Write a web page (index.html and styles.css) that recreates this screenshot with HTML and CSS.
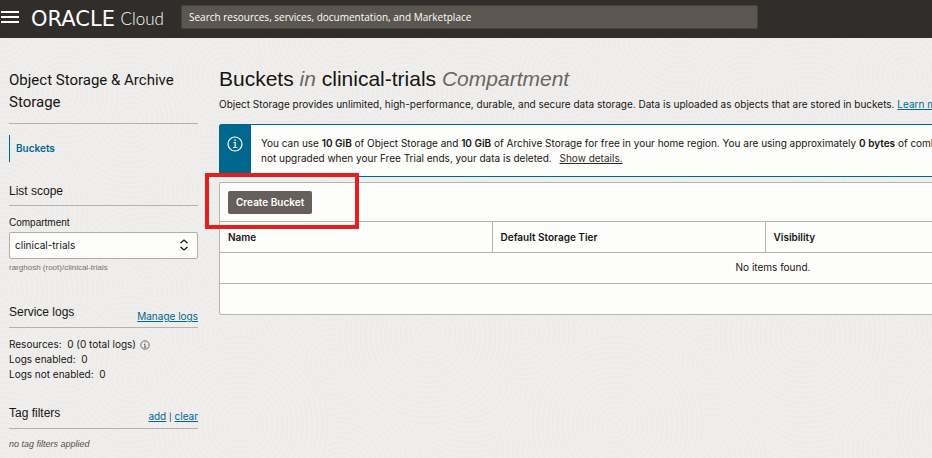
FILE: index.html
```
<!DOCTYPE html>
<html lang="en">
<head>
<meta charset="utf-8">
<title>Buckets - Oracle Cloud</title>
<link rel="stylesheet" href="styles.css">
</head>
<body>
<svg class="backdrop" aria-hidden="true">
  <defs>
    <radialGradient id="ring" gradientUnits="userSpaceOnUse" cx="0" cy="0" r="5" spreadMethod="repeat">
      <stop offset="0" stop-color="#f0efed"/>
      <stop offset=".5" stop-color="#ecebea"/>
      <stop offset="1" stop-color="#f0efed"/>
    </radialGradient>
    <circle id="disc" r="90" fill="url(#ring)"/>
    <circle id="small" r="55" fill="url(#ring)"/>
    <g id="tile">
      <use href="#disc" x="20" y="10"/>
      <use href="#disc" x="150" y="100"/>
      <use href="#disc" x="300" y="30"/>
      <use href="#disc" x="20" y="190"/>
      <use href="#small" x="230" y="170"/>
      <use href="#disc" x="330" y="210"/>
      <use href="#small" x="85" y="75"/>
      <use href="#disc" x="170" y="270"/>
      <use href="#small" x="245" y="55"/>
    </g>
  </defs>
  <use href="#tile" x="-20" y="20"/>
  <use href="#tile" x="320" y="20"/>
  <use href="#tile" x="660" y="20"/>
  <use href="#tile" x="-20" y="280"/>
  <use href="#tile" x="320" y="280"/>
  <use href="#tile" x="660" y="280"/>
  <use href="#small" x="333" y="362"/>
  <use href="#small" x="522" y="332"/>
  <use href="#small" x="710" y="362"/>
  <use href="#small" x="900" y="330"/>
  <use href="#disc" x="240" y="425"/>
  <use href="#disc" x="615" y="425"/>
  <use href="#disc" x="980" y="425"/>
  <use href="#disc" x="428" y="335"/>
  <use href="#disc" x="803" y="335"/>
</svg>
<header class="topbar">
  <button class="menu" aria-label="Navigation menu"><span></span><span></span><span></span></button>
  <a class="brand" href="#"><span class="oracle">ORACLE</span><span class="cloud">Cloud</span></a>
  <input class="search" type="search" aria-label="Search" placeholder="Search resources, services, documentation, and Marketplace">
</header>
<div class="layout">
  <aside class="sidebar">
    <h2 class="service">Object Storage &amp; Archive Storage</h2>
    <nav><a class="current" href="#">Buckets</a></nav>
    <section class="scope">
      <h3 class="heading">List scope</h3>
      <label for="compartment">Compartment</label>
      <div class="picker">
        <select id="compartment"><option>clinical-trials</option></select>
        <svg viewBox="0 0 10 12" aria-hidden="true"><path d="M1.500 4 5 1l3.500 3M1.500 8 5 11l3.500-3"/></svg>
      </div>
      <p class="path">rarghosh (root)/clinical-trials</p>
    </section>
    <section class="logs">
      <div class="heading"><h3>Service logs</h3><a href="#">Manage logs</a></div>
      <p>Resources: &nbsp;0 (0 total logs)
        <svg class="hint" viewBox="0 0 10 10" aria-hidden="true"><circle cx="5" cy="5" r="4.200"/><path d="M5 4.300v3M4 4.500h1M3.800 7.300h2.400M5 2.300v1"/></svg></p>
      <p>Logs enabled: &nbsp;0</p>
      <p>Logs not enabled: &nbsp;0</p>
    </section>
    <section class="tags">
      <div class="heading"><h3>Tag filters</h3><span><a href="#">add</a> <small>|</small> <a href="#">clear</a></span></div>
      <p class="none">no tag filters applied</p>
    </section>
  </aside>
  <main class="content">
    <h1>Buckets <em>in</em> clinical-trials <em>Compartment</em></h1>
    <p class="intro">Object Storage provides unlimited, high-performance, durable, and secure data storage. Data is uploaded as objects that are stored in buckets. <a href="#">Learn more</a></p>
    <div class="notice">
      <div class="notice-icon">
        <svg viewBox="0 0 16 16" aria-hidden="true"><circle cx="8" cy="8" r="7"/><path d="M6.500 6.500H8.200V11.500M6 11.500h4.300"/><path d="M7.200 4.200h1.600"/></svg>
      </div>
      <p>You can use <b>10 GiB</b> of Object Storage and <b>10 GiB</b> of Archive Storage for free in your home region. You are using approximately <b>0 bytes</b> of combined<br>not upgraded when your Free Trial ends, your data is deleted. <a href="#">Show details.</a></p>
    </div>
    <section class="panel">
      <div class="toolbar"><button class="create">Create Bucket</button><span class="highlight"></span></div>
      <table>
        <thead><tr><th>Name</th><th>Default Storage Tier</th><th>Visibility</th><th></th></tr></thead>
        <tbody><tr><td colspan="4">No items found.</td></tr></tbody>
      </table>
      <div class="pager"></div>
    </section>
  </main>
</div>
</body>
</html>
```
FILE: styles.css
```
* { box-sizing: border-box; }
body {
  margin: 0;
  min-height: 100vh;
  overflow-x: hidden;
  background: #f0eeec;
  color: #161513;
  font: 10px/15px Inter, "Liberation Sans", Arial, sans-serif;
}
h1, h2, h3, p { margin: 0; font-weight: 400; }
a { color: #00688c; }
b { font-weight: 600; }
.backdrop {
  position: absolute;
  inset: 0;
  z-index: -1;
  width: 100%;
  height: 100%;
}
.topbar {
  display: flex;
  align-items: center;
  height: 38px;
  padding-bottom: 4px;
  background: #312d2a;
}
.menu {
  display: flex;
  flex-direction: column;
  gap: 3px;
  width: 20px;
  padding: 0 1px;
  border: 0;
  background: none;
}
.menu span { width: 18px; height: 2px; background: #fff; }
.brand {
  display: flex;
  align-items: center;
  justify-content: space-between;
  width: 133px;
  margin: 4px 17px 0 11px;
  color: #fff;
  text-decoration: none;
}
.oracle { font: 21px/20px "DejaVu Sans", sans-serif; }
.cloud { font: 300 17px/20px Lato, sans-serif; }
.search {
  flex: 0 1 577px;
  height: 24px;
  padding: 0 7px;
  border: 1px solid #46413d;
  border-radius: 2px;
  background: #5b5650;
  font: 10px/16px "Open Sans", sans-serif;
}
.search::placeholder { color: #fff; opacity: 1; }
.layout { display: flex; gap: 21px; padding-left: 9px; overflow: hidden; }
.sidebar { flex: 0 0 189px; padding-top: 31px; }
.service {
  padding-bottom: 10px;
  border-bottom: 1px solid #b5b1ad;
  font: 15px/22px Roboto, Arial, sans-serif;
}
.current {
  display: block;
  margin: 11px 0 20px;
  padding: 6px;
  border-left: 1px solid #00688c;
  font-weight: 600;
  text-decoration: none;
}
.heading {
  display: flex;
  align-items: flex-end;
  justify-content: space-between;
  border-bottom: 1px solid #b5b1ad;
}
.heading, .heading h3 { font: 12px/16px "Liberation Sans", Arial, sans-serif; }
.heading > a, .heading > span { font: 10px/12px Inter, sans-serif; }
.scope .heading { padding-bottom: 5px; margin-bottom: 10px; line-height: 18px; }
.scope label { display: block; font: 10px/14px "Liberation Sans", Arial, sans-serif; }
.picker { position: relative; margin: 2px 0; }
.picker select {
  display: block;
  width: 100%;
  height: 27px;
  padding: 0 5px;
  border: 1px solid #b3ada6;
  border-radius: 2px;
  appearance: none;
  background: #fdfdfc;
  color: #161513;
  font: inherit;
}
.picker svg {
  position: absolute;
  top: 7px;
  right: 9px;
  width: 10px;
  height: 12px;
  fill: none;
  stroke: #161513;
  stroke-width: 1.3;
}
.path { color: #77716c; font: 8px/13px "Liberation Sans", Arial, sans-serif; }
.logs { margin-top: 30px; }
.logs .heading { padding-bottom: 5px; margin-bottom: 9px; }
.logs .heading h3 { padding-bottom: 2px; }
.hint {
  width: 10px;
  height: 10px;
  margin-left: 1px;
  vertical-align: -2px;
  fill: none;
  stroke: #55504c;
  stroke-width: .8;
}
.tags { margin-top: 23px; }
.tags .heading { padding-bottom: 5px; margin-bottom: 8px; }
.tags .heading h3 { padding-bottom: 2px; }
.tags small { font-size: 8px; }
.none { color: #55504c; font: italic 9px/15px "Liberation Sans", Arial, sans-serif; }
.content { flex: 1 0 1108px; padding-top: 29px; }
h1 { font: 21px/24px "Liberation Sans", Arial, sans-serif; }
h1 em { color: #6b6661; }
.intro { margin: 6px 0 12px; }
.notice {
  display: flex;
  border: 1px solid #00688c;
  border-radius: 2px;
  background: #fdfdfc;
}
.notice-icon { flex: 0 0 31px; padding: 11px 7px; background: #00688c; }
.notice-icon svg {
  display: block;
  width: 16px;
  height: 16px;
  fill: none;
  stroke: #fff;
  stroke-width: 1.2;
}
.notice p { padding: 11px 10px 10px; }
.notice p a { margin-left: 5px; color: #312d2a; }
.panel {
  margin-top: 5px;
  border: 1px solid #b9b3ad;
  border-radius: 2px;
  background: #fdfdfc;
}
.toolbar { position: relative; padding: 8px 8px 7px; }
.create {
  display: block;
  height: 23px;
  padding: 0 8px;
  border: 0;
  border-radius: 2px;
  background: #665f5b;
  color: #fff;
  font: 600 10px/15px Inter, Arial, sans-serif;
}
.highlight {
  position: absolute;
  top: -10px;
  left: -15px;
  width: 154px;
  height: 56px;
  border: 4px solid #e81e1e;
}
table { width: 100%; border-collapse: collapse; table-layout: fixed; }
th, td { height: 31px; padding: 0 8px; border-top: 1px solid #b9b3ad; }
th { font-weight: 600; text-align: left; }
th + th { border-left: 1px solid #b9b3ad; }
th:not(:last-child) { width: 273px; }
th:first-child { width: 272px; }
td { height: 30px; text-align: center; }
.pager { height: 31px; border-top: 1px solid #b9b3ad; }
```
